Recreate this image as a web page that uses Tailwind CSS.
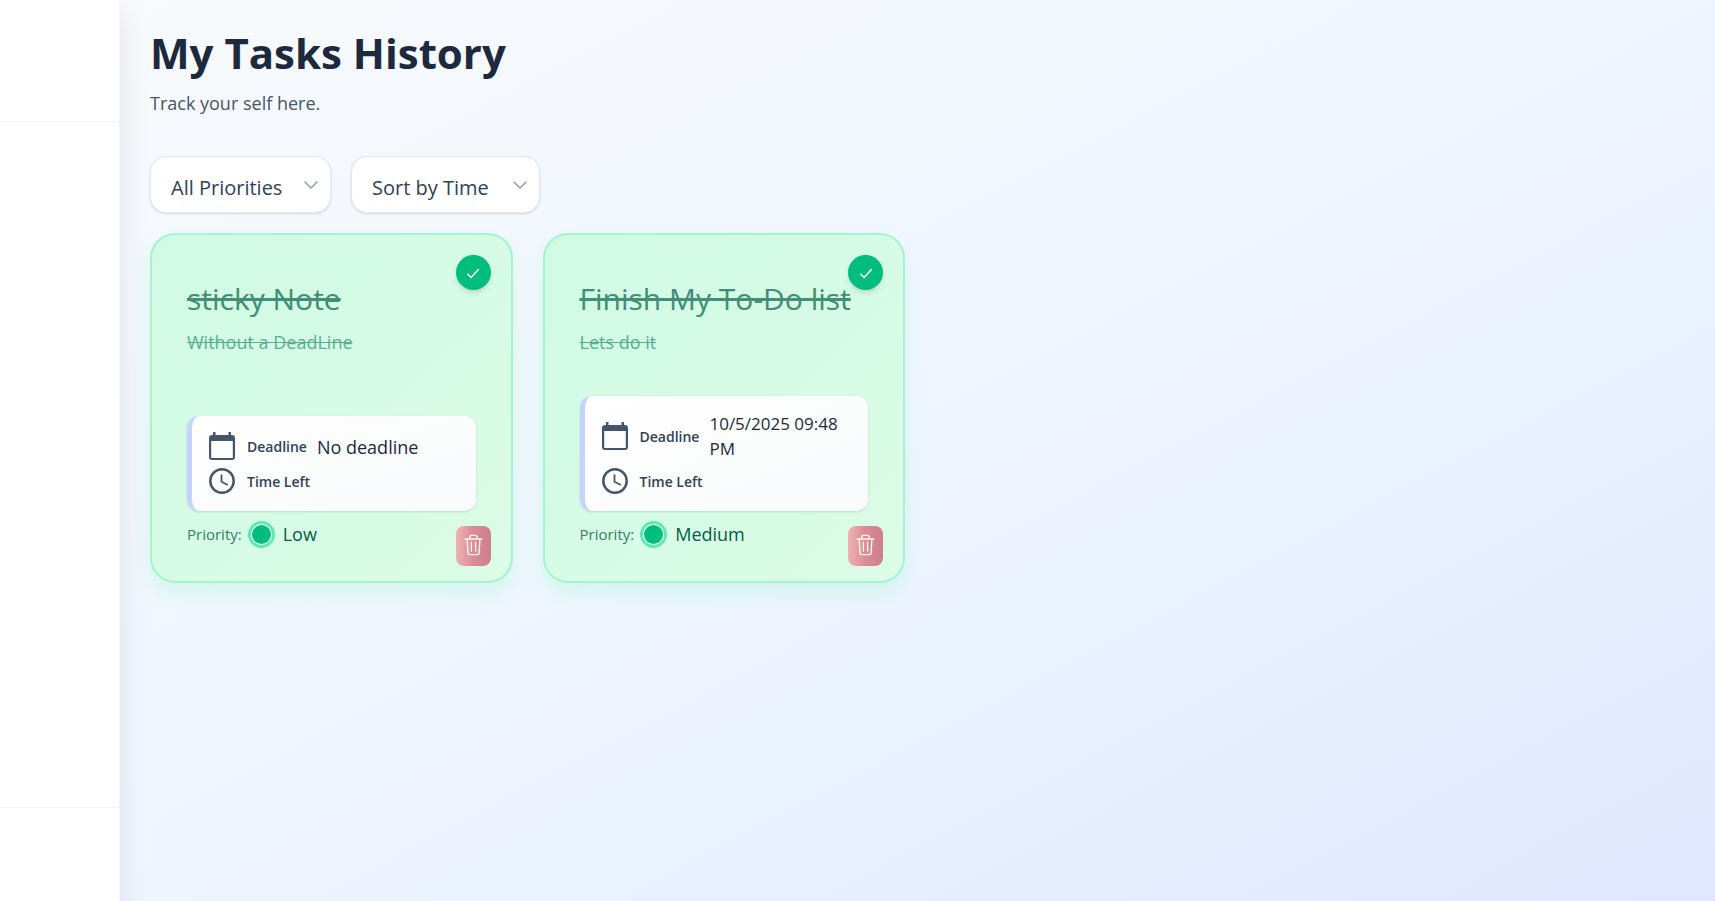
<!DOCTYPE html>
<html lang="en">
<head>
<meta charset="utf-8">
<title>My Tasks History</title>
<script src="https://cdn.jsdelivr.net/npm/@tailwindcss/browser@4"></script>
</head>
<body class="flex min-h-screen bg-linear-to-br from-slate-50 via-blue-50 to-indigo-100 font-['Open_Sans','Noto_Sans',sans-serif]">
<svg class="hidden" aria-hidden="true">
  <symbol id="check" viewBox="0 0 24 24"><path d="M4.5 13l5 5L19.5 7" fill="none" stroke="currentColor" stroke-width="2"/></symbol>
  <symbol id="calendar" viewBox="0 0 26 28"><path d="M4 0h2.500v3h13V0H22v3h1a3 3 0 0 1 3 3v19a3 3 0 0 1-3 3H3a3 3 0 0 1-3-3V6a3 3 0 0 1 3-3h1zM2.200 9v17h21.600V9z" fill="currentColor"/></symbol>
  <symbol id="clock" viewBox="0 0 26 26"><g fill="none" stroke="currentColor"><circle cx="13" cy="13" r="11.700" stroke-width="2.500"/><path d="M12.500 6.500v7.300l6.300 3.200" stroke-width="1.800"/></g></symbol>
  <symbol id="trash" viewBox="0 0 20 24"><g fill="none" stroke="currentColor" stroke-width="1.500" stroke-linecap="round" stroke-linejoin="round"><path d="M1 5.500h18M6 5.500V3.500A2 2 0 0 1 8 1.500h4a2 2 0 0 1 2 2v2M3 5.500l1 15a2 2 0 0 0 2 2h8a2 2 0 0 0 2-2l1-15M7.700 9v9.500M12.300 9v9.500"/></g></symbol>
  <symbol id="chevron" viewBox="0 0 14 8"><path d="M1 1l6 6 6-6" fill="none" stroke="currentColor" stroke-width="1.600" stroke-linecap="round" stroke-linejoin="round"/></symbol>
</svg>
<aside class="z-10 flex w-[120px] shrink-0 flex-col border-r border-gray-100 bg-white shadow-[0_12px_30px_rgb(0_0_0/0.09)]">
  <div class="h-[122px] border-b border-gray-100"></div>
  <nav class="flex-1"></nav>
  <div class="h-[94px] border-t border-gray-100"></div>
</aside>
<main class="flex-1 pt-[25px] pr-[25px] pl-[30px]">
  <h1 class="text-[42px] leading-[56px] font-bold text-slate-800">My Tasks History</h1>
  <p class="mt-2 text-[18px] leading-[28px] text-slate-600">Track your self here.</p>
  <div class="mt-[39px] flex gap-5">
    <div class="relative">
      <select aria-label="Filter by priority" class="h-[57px] w-[181px] appearance-none rounded-2xl border border-slate-200 bg-white pt-1.5 pl-5 text-[20px] text-slate-700 shadow-sm"><option>All Priorities</option></select>
      <svg class="pointer-events-none absolute top-[25px] right-[13px] h-2 w-3.5 text-slate-400"><use href="#chevron"/></svg>
    </div>
    <div class="relative">
      <select aria-label="Sort tasks" class="h-[57px] w-[189px] appearance-none rounded-2xl border border-slate-200 bg-white pt-1.5 pl-5 text-[20px] text-slate-700 shadow-sm"><option>Sort by Time</option></select>
      <svg class="pointer-events-none absolute top-[25px] right-[13px] h-2 w-3.5 text-slate-400"><use href="#chevron"/></svg>
    </div>
  </div>
  <section class="mt-5 grid grid-cols-4 gap-[30px]">
    <article class="relative flex min-h-[350px] flex-col rounded-[25px] border-2 border-[#a4f4cf] bg-linear-to-br from-emerald-100 to-green-100 px-[35px] pt-[45px] pb-[33px] shadow-[0_10px_20px_rgb(164_244_207/0.4)]">
      <span class="absolute top-5 right-5 flex size-[35px] items-center justify-center rounded-full bg-[#00bc7d] text-white shadow-md"><svg class="size-[18px]"><use href="#check"/></svg></span>
      <h2 class="text-[30px] leading-[38px] text-[#428e76] line-through decoration-[3px]">sticky Note</h2>
      <p class="mt-3 text-[18px] leading-6 text-[#58b092] line-through decoration-1">Without a DeadLine</p>
      <div class="mt-auto flex flex-col gap-[5px] rounded-xl border-l-[5px] border-[#c6d2ff] bg-linear-to-br from-white to-gray-50 py-[15px] pr-[15px] pl-[17px] shadow-sm">
        <div class="flex h-[30px] items-center text-slate-600"><svg class="mr-3 h-7 w-[26px] shrink-0"><use href="#calendar"/></svg><span class="mr-2.5 text-[14px] font-semibold text-slate-700">Deadline</span><span class="pt-0.5 text-[18px] leading-[25px] font-medium text-slate-800">No deadline</span></div>
        <div class="flex h-[30px] items-center text-slate-600"><svg class="mr-3 size-[26px] shrink-0"><use href="#clock"/></svg><span class="text-[14px] font-semibold text-slate-700">Time Left</span></div>
      </div>
      <div class="mt-[10px] flex h-[27px] items-center"><span class="text-[15px] text-[#358069]">Priority:</span><span class="mr-2 ml-[6px] size-[27px] rounded-full border-[3px] border-[#5ee9b5] bg-white p-px"><span class="block size-full rounded-full bg-[#00bc7d]"></span></span><span class="text-[18px] font-medium text-[#006045]">Low</span></div>
      <button aria-label="Delete task" class="absolute right-5 bottom-[15px] flex h-10 w-[35px] items-center justify-center rounded-lg bg-linear-to-r from-[#ecb2b0] via-[#dc8b96] to-[#cb808c] text-[#f5fcef]"><svg class="mb-0.5 h-[22px] w-[19px]"><use href="#trash"/></svg></button>
    </article>
    <article class="relative flex min-h-[350px] flex-col rounded-[25px] border-2 border-[#a4f4cf] bg-linear-to-br from-emerald-100 to-green-100 px-[35px] pt-[45px] pb-[33px] shadow-[0_10px_20px_rgb(164_244_207/0.4)]">
      <span class="absolute top-5 right-5 flex size-[35px] items-center justify-center rounded-full bg-[#00bc7d] text-white shadow-md"><svg class="size-[18px]"><use href="#check"/></svg></span>
      <h2 class="text-[30px] leading-[38px] whitespace-nowrap text-[#428e76] line-through decoration-[3px]">Finish My To-Do list</h2>
      <p class="mt-3 text-[18px] leading-6 text-[#58b092] line-through decoration-1">Lets do it</p>
      <div class="mt-auto flex flex-col gap-[5px] rounded-xl border-l-[5px] border-[#c6d2ff] bg-linear-to-br from-white to-gray-50 py-[15px] pr-[15px] pl-[17px] shadow-sm">
        <div class="flex items-center text-slate-600"><svg class="mr-3 h-7 w-[26px] shrink-0"><use href="#calendar"/></svg><span class="mr-2.5 text-[14px] font-semibold text-slate-700">Deadline</span><span class="text-[17px] leading-[25px] font-medium text-slate-800">10/5/2025 09:48 PM</span></div>
        <div class="flex h-[30px] items-center text-slate-600"><svg class="mr-3 size-[26px] shrink-0"><use href="#clock"/></svg><span class="text-[14px] font-semibold text-slate-700">Time Left</span></div>
      </div>
      <div class="mt-[10px] flex h-[27px] items-center"><span class="text-[15px] text-[#358069]">Priority:</span><span class="mr-2 ml-[6px] size-[27px] rounded-full border-[3px] border-[#5ee9b5] bg-white p-px"><span class="block size-full rounded-full bg-[#00bc7d]"></span></span><span class="text-[18px] font-medium text-[#006045]">Medium</span></div>
      <button aria-label="Delete task" class="absolute right-5 bottom-[15px] flex h-10 w-[35px] items-center justify-center rounded-lg bg-linear-to-r from-[#ecb2b0] via-[#dc8b96] to-[#cb808c] text-[#f5fcef]"><svg class="mb-0.5 h-[22px] w-[19px]"><use href="#trash"/></svg></button>
    </article>
  </section>
</main>
</body>
</html>
